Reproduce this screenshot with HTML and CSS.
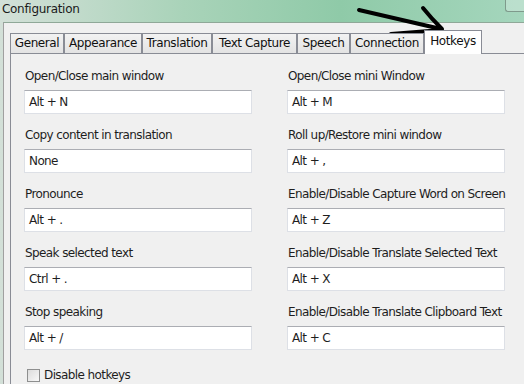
FILE: index.html
```html
<!DOCTYPE html>
<html lang="en">
<head>
    <meta charset="UTF-8">
    <title>Configuration</title>
    <link rel="stylesheet" href="styles.css">
</head>
<body>
    <div class="window">
        <!-- Title bar -->
        <div class="titlebar">
            <span class="title">Configuration</span>
            <span class="close-edge"></span>
        </div>

        <div class="client">
            <!-- Tabs -->
            <div class="tabs">
                <div class="tab w-general">General</div>
                <div class="tab w-appearance">Appearance</div>
                <div class="tab w-translation">Translation</div>
                <div class="tab w-capture">Text Capture</div>
                <div class="tab w-speech">Speech</div>
                <div class="tab w-connection">Connection</div>
                <div class="tab active w-hotkeys">Hotkeys</div>
            </div>

            <!-- Hotkeys page -->
            <div class="panel">
                <div class="grid">
                    <div class="field">
                        <label>Open/Close main window</label>
                        <div class="box">Alt + N</div>
                    </div>
                    <div class="field">
                        <label>Open/Close mini Window</label>
                        <div class="box">Alt + M</div>
                    </div>
                    <div class="field">
                        <label>Copy content in translation</label>
                        <div class="box">None</div>
                    </div>
                    <div class="field">
                        <label>Roll up/Restore mini window</label>
                        <div class="box">Alt + ,</div>
                    </div>
                    <div class="field">
                        <label>Pronounce</label>
                        <div class="box">Alt + .</div>
                    </div>
                    <div class="field">
                        <label>Enable/Disable Capture Word on Screen</label>
                        <div class="box">Alt + Z</div>
                    </div>
                    <div class="field">
                        <label>Speak selected text</label>
                        <div class="box">Ctrl + .</div>
                    </div>
                    <div class="field">
                        <label>Enable/Disable Translate Selected Text</label>
                        <div class="box">Alt + X</div>
                    </div>
                    <div class="field">
                        <label>Stop speaking</label>
                        <div class="box">Alt + /</div>
                    </div>
                    <div class="field">
                        <label>Enable/Disable Translate Clipboard Text</label>
                        <div class="box">Alt + C</div>
                    </div>
                </div>

                <div class="check-row">
                    <span class="checkbox"></span>
                    <span>Disable hotkeys</span>
                </div>
            </div>
        </div>

        <!-- Hand-drawn arrow pointing at the Hotkeys tab -->
        <svg class="arrow" width="110" height="40" viewBox="0 0 110 40">
            <path d="M4 6 L86 25 M68 4 Q76 14 87 25 M36 30 L87 26" stroke="#000" stroke-width="4" stroke-linecap="round" fill="none"/>
        </svg>
    </div>
</body>
</html>
```

FILE: styles.css
```css
body {
    margin: 0;
    font-family: 'DejaVu Sans', sans-serif;
    font-size: 11px;
    color: #1e1e1e;
    background: #f0f0f0;
}

.window {
    position: relative;
    width: 524px;
    height: 384px;
    overflow: hidden;
    background: linear-gradient(90deg, #d3e0d8 0%, #a9d3b9 35%, #8fcaa8 65%, #a5d6bd 100%);
}

/* Title bar */
.titlebar {
    height: 22px;
    display: flex;
    align-items: center;
    justify-content: space-between;
    padding-left: 2px;
}

.title {
    font-size: 12px;
    letter-spacing: -0.3px;
    color: #1a1a1a;
    margin-top: -4px;
}

.close-edge {
    width: 18px;
    height: 12px;
    margin-top: -12px;
    border: 1px solid #7f9a8c;
    border-top: none;
    border-right: none;
    border-radius: 0 0 0 3px;
    background: rgba(255, 255, 255, 0.25);
}

/* Client area */
.client {
    margin-left: 3px;
    height: 362px;
    background: #f0f0f0;
    border-left: 1px solid #a0a0a0;
    border-top: 1px solid #8fa898;
    padding: 9px 0 0 6px;
    box-sizing: border-box;
}

.tabs {
    display: flex;
    align-items: flex-end;
    height: 21px;
    position: relative;
    z-index: 1;
}

.tab {
    height: 20px;
    box-sizing: border-box;
    border: 1px solid #898c95;
    border-bottom: none;
    background: linear-gradient(#f2f2f2, #e3e3e3);
    text-align: center;
    line-height: 19px;
    font-size: 12px;
    letter-spacing: -0.4px;
    color: #111;
}

.tab.active {
    height: 24px;
    background: #fff;
    line-height: 20px;
    margin-bottom: -1px;
    padding-bottom: 1px;
}

.w-general { width: 54px; }
.w-appearance { width: 78px; }
.w-translation { width: 70px; }
.w-capture { width: 85px; }
.w-speech { width: 53px; }
.w-connection { width: 74px; }
.w-hotkeys { width: 58px; }

/* Panel */
.panel {
    border-top: 1px solid #898c95;
    border-left: 1px solid #898c95;
    background: #f0f0f0;
    padding: 14px 0 0 13px;
    height: 340px;
    box-sizing: border-box;
}

.grid {
    display: grid;
    grid-template-columns: 228px 218px;
    column-gap: 35px;
    row-gap: 13px;
}

.field label {
    display: block;
    height: 16px;
    line-height: 16px;
    margin: 0 0 6px 1px;
    font-size: 12px;
    letter-spacing: -0.6px;
    white-space: nowrap;
}

.box {
    height: 24px;
    box-sizing: border-box;
    background: #fff;
    border: 1px solid #dde0e6;
    border-top-color: #abadb3;
    padding-left: 4px;
    line-height: 22px;
    font-size: 12px;
    letter-spacing: -0.6px;
}

.check-row {
    display: flex;
    align-items: center;
    gap: 4px;
    margin: 18px 0 0 3px;
    font-size: 12px;
    letter-spacing: -0.6px;
}

.checkbox {
    width: 11px;
    height: 11px;
    border: 1px solid #8e8f8f;
    background: linear-gradient(135deg, #dcdcdc, #f8f8f8);
}

/* Arrow overlay */
.arrow {
    position: absolute;
    left: 355px;
    top: 4px;
}
```
